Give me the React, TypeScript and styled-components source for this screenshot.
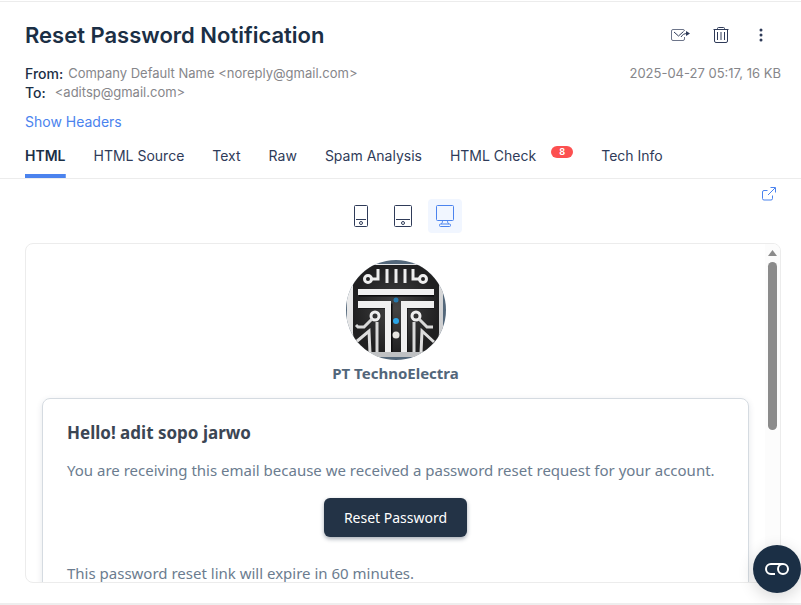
import React, { useState } from "react";
import styled, { createGlobalStyle } from "styled-components";

const colors = {
  ink: "#1b2f45",
  nav: "#2f3b59",
  muted: "#86868a",
  blue: "#4b83ee",
  line: "#ececec",
  slate: "#6b7c8f",
};

const GlobalStyle = createGlobalStyle`
  * { box-sizing: border-box; }
  body {
    margin: 0;
    background: #fff;
    font-family: Inter, "Liberation Sans", sans-serif;
    font-size: 13px;
    color: ${colors.ink};
  }
  button { font: inherit; color: inherit; border: 0; background: none; padding: 0; cursor: pointer; }
  a { text-decoration: none; }
  h1, h2, p, dl, dd { margin: 0; }
  svg { flex: none; }
`;

const Page = styled.main`
  display: flex;
  flex-direction: column;
  height: 100vh;
  padding-top: 1px;
`;

const MessageHeader = styled.header`
  border-top: 1px solid ${colors.line};
  padding: 17px 20px 0 25px;
`;

const TitleRow = styled.div`
  display: flex;
  align-items: center;
  justify-content: space-between;
  height: 32px;
`;

const Title = styled.h1`
  font-size: 22px;
  line-height: 32px;
  font-weight: 600;
`;

const Actions = styled.div`
  display: flex;
  gap: 20px;
  margin-right: 10px;
`;

const IconButton = styled.button`
  display: grid;
  place-items: center;
  width: 20px;
  height: 20px;
  color: ${colors.nav};
`;

const MetaRow = styled.div`
  display: flex;
  justify-content: space-between;
  margin-top: 13px;
  line-height: 19px;
`;

const Addresses = styled.dl`
  display: grid;
`;

const Address = styled.div<{ $gap: number }>`
  display: flex;
  gap: ${(p) => p.$gap}px;
  dt { font-weight: 500; font-size: 14px; }
  dd { color: ${colors.muted}; }
`;

const Stamp = styled.time`
  color: ${colors.muted};
`;

const HeadersLink = styled.a`
  display: inline-block;
  margin-top: 10px;
  font-size: 14px;
  line-height: 20px;
  color: ${colors.blue};
`;

const Tabs = styled.nav`
  display: flex;
  gap: 28px;
  margin-top: 2px;
  padding: 0 25px;
  border-bottom: 1px solid ${colors.line};
`;

const Tab = styled.button<{ $active: boolean }>`
  display: flex;
  gap: 15px;
  height: 44px;
  padding-top: 12px;
  white-space: nowrap;
  font-size: 14px;
  line-height: 20px;
  font-weight: ${(p) => (p.$active ? 600 : 400)};
  color: ${(p) => (p.$active ? colors.ink : colors.nav)};
  background: ${(p) => (p.$active ? `linear-gradient(${colors.blue}, ${colors.blue}) bottom / 100% 4px no-repeat` : "none")};
`;

const Count = styled.span`
  width: 22px;
  height: 12px;
  border-radius: 6px;
  background: #fc5050;
  color: #fff;
  font-size: 9px;
  line-height: 12px;
  font-weight: 700;
  text-align: center;
`;

const Preview = styled.section`
  flex: 1;
  min-height: 0;
  display: flex;
  flex-direction: column;
  padding: 8px 20px 20px 25px;
  border-bottom: 2px solid #eee;
`;

const PreviewBar = styled.div`
  display: grid;
  grid-template-columns: 1fr auto 1fr;
  margin-bottom: 10px;
`;

const Devices = styled.div`
  grid-column: 2;
  display: flex;
  gap: 8px;
  margin-top: 12px;
`;

const DeviceButton = styled.button<{ $active: boolean }>`
  display: grid;
  place-items: center;
  width: 34px;
  height: 34px;
  border-radius: 4px;
  color: ${(p) => (p.$active ? colors.blue : colors.nav)};
  background: ${(p) => (p.$active ? "#f1f6ff" : "transparent")};
`;

const OpenLink = styled.a`
  justify-self: end;
  align-self: start;
  display: flex;
  margin-right: 5px;
  color: ${colors.blue};
`;

const Frame = styled.div`
  flex: 1;
  min-height: 0;
  display: flex;
  border: 1px solid ${colors.line};
  border-radius: 8px;
  overflow: hidden;
`;

const Mail = styled.article`
  flex: 1;
  min-width: 0;
  display: flex;
  flex-direction: column;
  align-items: center;
  padding: 16px 16px 0;
  font-family: "Noto Sans", "Open Sans", sans-serif;
  font-size: 15px;
  color: ${colors.slate};
`;

const Brand = styled.p`
  margin: 1px 0 13px;
  font-size: 15px;
  line-height: 24px;
  font-weight: 700;
  color: #52667a;
`;

const Card = styled.div`
  flex: none;
  align-self: stretch;
  display: flex;
  flex-direction: column;
  padding: 22px 24px;
  border: 1px solid #d5dbe1;
  border-radius: 8px;
  box-shadow: 0 2px 6px rgba(40, 60, 90, 0.12);
  line-height: 24px;
`;

const Greeting = styled.h2`
  margin-bottom: 13px;
  font-size: 17px;
  line-height: 24px;
  font-weight: 700;
  color: #3b4654;
`;

const ResetLink = styled.a`
  align-self: center;
  margin: 16px 0 24px;
  padding: 0 20px;
  border-radius: 6px;
  background: #233346;
  box-shadow: 0 2px 4px rgba(35, 51, 70, 0.4);
  color: #fff;
  font-size: 14px;
  line-height: 39px;
`;

const Scrollbar = styled.div`
  flex: none;
  display: flex;
  flex-direction: column;
  align-items: center;
  gap: 6px;
  width: 15px;
  padding-top: 6px;
  background: #fcfcfc;
`;

const Thumb = styled.div`
  width: 9px;
  height: 168px;
  border-radius: 5px;
  background: #8b8b8b;
`;

const FloatingButton = styled.button`
  position: fixed;
  right: 0;
  bottom: 12px;
  display: grid;
  place-items: center;
  width: 48px;
  height: 48px;
  border-radius: 50%;
  background: #1b2f45;
  color: #fff;
  box-shadow: 0 4px 16px rgba(0, 0, 0, 0.16);
`;

const ForwardIcon = () => (
  <svg width="20" height="14" viewBox="0 0 20 14" fill="none" stroke="currentColor">
    <path
      d="M13.500 9v2a1.500 1.500 0 0 1-1.500 1.500H2A1.500 1.500 0 0 1 .5 11V3A1.500 1.500 0 0 1 2 1.500h10A1.500 1.500 0 0 1 13.500 3"
      strokeOpacity=".7"
    />
    <path d="M3 4l4.500 4 5-4.500M10 9c1.500-2.500 3.500-3.500 6-3.500" />
    <path d="M15 3l4 2.500L15 8z" fill="currentColor" stroke="none" />
  </svg>
);

const TrashIcon = () => (
  <svg width="16" height="16" viewBox="0 0 16 16" fill="none" stroke="currentColor">
    <path d="M.5 2.500h15M4.500 2.500V1.500a1 1 0 0 1 1-1h5a1 1 0 0 1 1 1v1" />
    <path d="M1.500 2.500V14a1.500 1.500 0 0 0 1.500 1.500h10a1.500 1.500 0 0 0 1.500-1.500V2.500" />
    <path d="M4.500 5v8M8 5v8M11.500 5v8" />
  </svg>
);

const MoreIcon = () => (
  <svg width="4" height="14" viewBox="0 0 4 14" fill="currentColor">
    <circle cx="2" cy="2" r="1.500" />
    <circle cx="2" cy="7" r="1.500" />
    <circle cx="2" cy="12" r="1.500" />
  </svg>
);

const HandheldIcon = ({ width }: { width: number }) => (
  <svg width={width} height="22" fill="none" stroke="currentColor">
    <rect x=".5" y=".5" width={width - 1} height="21" rx="1" />
    <path d={`M2 14.500h${width - 4}`} />
    <circle cx={width / 2} cy="18" r="1.500" />
  </svg>
);

const DesktopIcon = () => (
  <svg width="18" height="22" viewBox="0 0 18 22" fill="none" stroke="currentColor">
    <rect x=".5" y=".5" width="17" height="15" rx="1" />
    <path d="M6.500 15.500c0 2-.5 3-1.500 3.500M11.500 15.500c0 2 .5 3 1.500 3.500" />
    <rect x="3.500" y="19" width="11" height="2.500" rx="1" />
  </svg>
);

const ExternalIcon = () => (
  <svg width="14" height="14" viewBox="0 0 14 14" fill="none" stroke="currentColor">
    <path d="M5.500 3.500H2A1.500 1.500 0 0 0 .5 5v6.500A1.500 1.500 0 0 0 2 13h7a1.500 1.500 0 0 0 1.500-1.500V8.500M6 8L13 1M8.500 .5h5v5" />
  </svg>
);

const ToggleIcon = () => (
  <svg width="24" height="12" viewBox="0 0 24 12" fill="none" stroke="currentColor" strokeWidth="2">
    <path d="M10 11H6A5 5 0 0 1 6 1h12" />
    <circle cx="18" cy="6" r="5" />
  </svg>
);

const CompanyLogo = () => (
  <svg width="100" height="100" viewBox="0 0 100 100" role="img" aria-label="PT TechnoElectra logo">
    <defs>
      <clipPath id="disc"><circle cx="50" cy="50" r="50" /></clipPath>
      <linearGradient id="steel" x2="1" y2="1">
        <stop stopColor="#f4f4f4" />
        <stop offset="1" stopColor="#c5c6c8" />
      </linearGradient>
      <radialGradient id="board">
        <stop stopColor="#444" />
        <stop offset="1" stopColor="#202021" />
      </radialGradient>
    </defs>
    <g clipPath="url(#disc)">
      <path d="M0 0h100v100H0z" fill="#54687b" />
      <rect x="1" y="4" width="96" height="93" rx="20" fill="url(#steel)" />
      <rect x="7" y="5" width="86" height="87" rx="19" fill="url(#board)" />
      <g fill="none" stroke="#0b0b0c" strokeWidth="5" transform="translate(1 2)">
        <path d="M12 32h75M12 44h31v48M87 44H58v48" />
      </g>
      <g fill="none" stroke="#eee" strokeWidth="3">
        <circle cx="22" cy="19" r="3.500" />
        <circle cx="77" cy="19" r="3.500" />
        <path d="M26 19h6V9M41 9v14M50 9v14M59 9v14M73 19h-6V9" />
        <circle cx="29" cy="56" r="4" />
        <circle cx="70" cy="56" r="4" />
        <path d="M26 59l-8 8h-6l-2-2M73 59l8 8h6M31 62v31M68 62v31" stroke="#d9d9d9" />
        <path d="M10 82l13-11 1 22M88 82L76 71l-1 22" stroke="#ddd" />
      </g>
      <g fill="#f0f0f0">
        <rect x="12" y="29" width="76" height="6" />
        <path d="M12 41h33v53h-6V48H12zM88 41H55v53h6V48h27z" />
      </g>
      <path d="M18 92h64l-5 5H23z" fill="#bfc1c3" />
      <circle cx="50" cy="40" r="2.500" fill="#2679ad" />
      <circle cx="50" cy="61" r="3" fill="#2ca6e8" />
      <circle cx="50" cy="75" r="3.500" fill="#e7e5e1" />
    </g>
  </svg>
);

const tabs: { label: string; count?: number }[] = [
  { label: "HTML" },
  { label: "HTML Source" },
  { label: "Text" },
  { label: "Raw" },
  { label: "Spam Analysis" },
  { label: "HTML Check", count: 8 },
  { label: "Tech Info" },
];

const devices = [
  { name: "Phone", icon: <HandheldIcon width={14} /> },
  { name: "Tablet", icon: <HandheldIcon width={18} /> },
  { name: "Desktop", icon: <DesktopIcon /> },
];

export default function App() {
  const [tab, setTab] = useState("HTML");
  const [device, setDevice] = useState("Desktop");

  return (
    <Page>
      <GlobalStyle />
      <MessageHeader>
        <TitleRow>
          <Title>Reset Password Notification</Title>
          <Actions>
            <IconButton aria-label="Forward"><ForwardIcon /></IconButton>
            <IconButton aria-label="Delete"><TrashIcon /></IconButton>
            <IconButton aria-label="More actions"><MoreIcon /></IconButton>
          </Actions>
        </TitleRow>
        <MetaRow>
          <Addresses>
            <Address $gap={5}>
              <dt>From:</dt>
              <dd>Company Default Name &lt;noreply@gmail.com&gt;</dd>
            </Address>
            <Address $gap={9}>
              <dt>To:</dt>
              <dd>&lt;aditsp@gmail.com&gt;</dd>
            </Address>
          </Addresses>
          <Stamp>2025-04-27 05:17, 16 KB</Stamp>
        </MetaRow>
        <HeadersLink href="#headers">Show Headers</HeadersLink>
      </MessageHeader>

      <Tabs aria-label="Message views">
        {tabs.map(({ label, count }) => (
          <Tab key={label} $active={label === tab} onClick={() => setTab(label)}>
            {label}
            {count !== undefined && <Count>{count}</Count>}
          </Tab>
        ))}
      </Tabs>

      <Preview>
        <PreviewBar>
          <Devices>
            {devices.map(({ name, icon }) => (
              <DeviceButton
                key={name}
                aria-label={name}
                aria-pressed={name === device}
                $active={name === device}
                onClick={() => setDevice(name)}
              >
                {icon}
              </DeviceButton>
            ))}
          </Devices>
          <OpenLink href="#open" aria-label="Open in new tab"><ExternalIcon /></OpenLink>
        </PreviewBar>
        <Frame>
          <Mail>
            <CompanyLogo />
            <Brand>PT TechnoElectra</Brand>
            <Card>
              <Greeting>Hello! adit sopo jarwo</Greeting>
              <p>You are receiving this email because we received a password reset request for your account.</p>
              <ResetLink href="#reset">Reset Password</ResetLink>
              <p>This password reset link will expire in 60 minutes.</p>
            </Card>
          </Mail>
          <Scrollbar aria-hidden="true">
            <svg width="9" height="6" fill="#8b8b8b"><path d="M4.500 0L9 6H0z" /></svg>
            <Thumb />
          </Scrollbar>
        </Frame>
      </Preview>

      <FloatingButton aria-label="Privacy settings"><ToggleIcon /></FloatingButton>
    </Page>
  );
}
